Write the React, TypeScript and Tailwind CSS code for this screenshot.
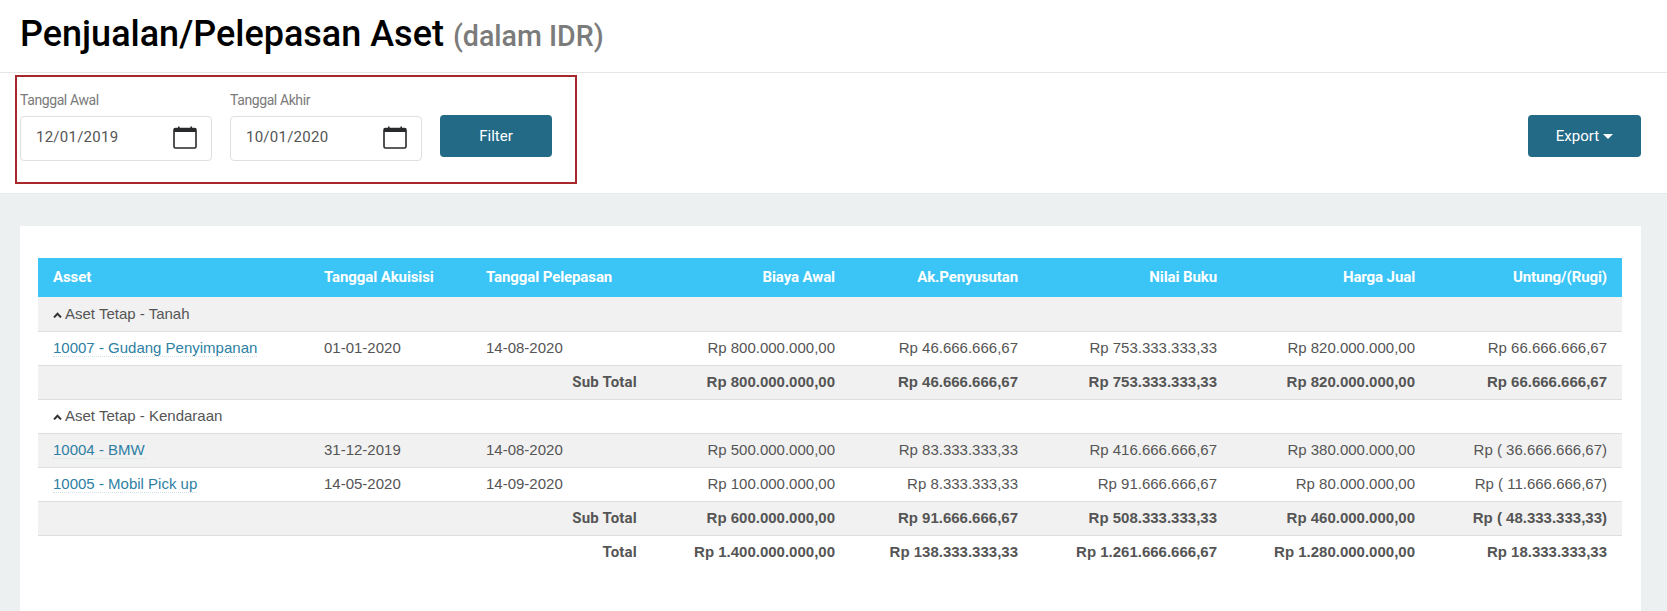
import React from "react";

const font = "font-['Roboto',sans-serif]";

function CalendarIcon() {
  return (
    <svg width="24" height="23" viewBox="0 0 24 23" fill="none" className="shrink-0">
      <rect x="1" y="2.5" width="22" height="19.5" rx="1.5" stroke="#27292b" strokeWidth="1.6" />
      <rect x="1" y="2" width="22" height="4" fill="#27292b" />
      <rect x="5" y="0.5" width="1.6" height="2.5" fill="#27292b" />
      <rect x="17.4" y="0.5" width="1.6" height="2.5" fill="#27292b" />
    </svg>
  );
}

function DateField({ label, value }: { label: string; value: string }) {
  return (
    <div className="w-[192px]">
      <div className="pt-[1px] text-[14px] leading-[20px] text-[#7a7a7a] tracking-[-0.4px]">{label}</div>
      <div className="mt-[6px] h-[45px] flex items-center justify-between pl-[15px] pr-[14px] pb-[2px] border border-[#dfdfdf] rounded-[4px] bg-white">
        <span className="text-[15px] text-[#555] tracking-[0.25px]">{value}</span>
        <CalendarIcon />
      </div>
    </div>
  );
}

function Chevron() {
  return (
    <svg width="9" height="6" viewBox="0 0 9 6" className="inline-block mr-[3px] mb-[-1px]">
      <path d="M1 5.4 L4.5 1.8 L8 5.4" fill="none" stroke="#333" strokeWidth="2" />
    </svg>
  );
}

type Row = { asset: string; a: string; b: string; vals: string[] };

const td = "px-[15px] text-right";

function GroupRow({ name }: { name: string }) {
  return (
    <tr className="h-[34px] border-b border-[#dedede]">
      <td colSpan={8} className="px-[15px] text-[#555]">
        <Chevron />
        {name}
      </td>
    </tr>
  );
}

function DataRow({ row, shaded }: { row: Row; shaded?: boolean }) {
  return (
    <tr className={`h-[34px] border-b border-[#dedede] ${shaded ? "bg-[#f1f1f1]" : ""}`}>
      <td className="px-[15px]">
        <a className="text-[#2e7fa3] border-b border-dotted border-[#d3e0e7]">{row.asset}</a>
      </td>
      <td className="px-[15px]">{row.a}</td>
      <td className="px-[15px]">{row.b}</td>
      {row.vals.map((v, i) => (
        <td key={i} className={td}>
          {v}
        </td>
      ))}
    </tr>
  );
}

function SumRow({ label, vals, shaded }: { label: string; vals: string[]; shaded?: boolean }) {
  return (
    <tr className={`h-[34px] font-bold ${shaded ? "bg-[#f1f1f1] border-b border-[#dedede]" : ""}`}>
      <td colSpan={3} className={`${td} ${font} tracking-[0.2px]`}>
        {label}
      </td>
      {vals.map((v, i) => (
        <td key={i} className={td}>
          {v}
        </td>
      ))}
    </tr>
  );
}

export default function App() {
  return (
    <div className={`${font} relative h-[611px] w-[1667px] overflow-hidden bg-[#ecf0f1]`}>
      <div className="h-[73px] bg-white border-b border-[#e6e6e6] pl-[20px] pt-[10px]">
        <h1 className="text-[36px] leading-[48px] font-medium text-black">
          Penjualan/Pelepasan Aset{" "}
          <span className="text-[28.6px] font-medium text-[#7b7b7b]">(dalam IDR)</span>
        </h1>
      </div>

      <div className="h-[121px] bg-white border-b border-[#e9ecec] flex justify-between pl-[20px] pr-[26px] pt-[16px]">
        <div className="flex gap-[18px]">
          <DateField label="Tanggal Awal" value="12/01/2019" />
          <DateField label="Tanggal Akhir" value="10/01/2020" />
          <button className="mt-[26px] h-[42px] w-[112px] rounded-[4px] bg-[#236a87] text-white text-[15px]">
            Filter
          </button>
        </div>
        <button className="mt-[26px] h-[42px] w-[113px] rounded-[4px] bg-[#236a87] text-white text-[15px] flex items-center justify-center gap-[4px]">
          Export
          <span className="border-x-[5px] border-t-[5px] border-x-transparent border-t-white" />
        </button>
      </div>

      <div className="mx-[20px] mt-[32px] mr-[26px] h-[400px] bg-white pt-[32px] px-[18px] pr-[19px]">
        <table className="w-[1584px] table-fixed border-collapse text-[15px] text-[#555] font-['Liberation_Sans',sans-serif]">
          <colgroup>
            <col className="w-[271px]" />
            <col className="w-[162px]" />
            <col className="w-[181px]" />
            <col className="w-[198px]" />
            <col className="w-[183px]" />
            <col className="w-[199px]" />
            <col className="w-[198px]" />
            <col className="w-[192px]" />
          </colgroup>
          <thead>
            <tr className={`h-[39px] bg-[#3bc5f6] text-white font-bold ${font} tracking-[-0.1px]`}>
              <th className="px-[15px] text-left">Asset</th>
              <th className="px-[15px] text-left">Tanggal Akuisisi</th>
              <th className="px-[15px] text-left">Tanggal Pelepasan</th>
              <th className={td}>Biaya Awal</th>
              <th className={td}>Ak.Penyusutan</th>
              <th className={td}>Nilai Buku</th>
              <th className={td}>Harga Jual</th>
              <th className={td}>Untung/(Rugi)</th>
            </tr>
          </thead>
          <tbody>
            <tr className="h-[34px] bg-[#f1f1f1] border-b border-[#dedede]">
              <td colSpan={8} className="px-[15px] text-[#555]">
                <Chevron />
                Aset Tetap - Tanah
              </td>
            </tr>
            <DataRow
              row={{
                asset: "10007 - Gudang Penyimpanan",
                a: "01-01-2020",
                b: "14-08-2020",
                vals: ["Rp 800.000.000,00", "Rp 46.666.666,67", "Rp 753.333.333,33", "Rp 820.000.000,00", "Rp 66.666.666,67"],
              }}
            />
            <SumRow
              shaded
              label="Sub Total"
              vals={["Rp 800.000.000,00", "Rp 46.666.666,67", "Rp 753.333.333,33", "Rp 820.000.000,00", "Rp 66.666.666,67"]}
            />
            <GroupRow name="Aset Tetap - Kendaraan" />
            <DataRow
              shaded
              row={{
                asset: "10004 - BMW",
                a: "31-12-2019",
                b: "14-08-2020",
                vals: ["Rp 500.000.000,00", "Rp 83.333.333,33", "Rp 416.666.666,67", "Rp 380.000.000,00", "Rp ( 36.666.666,67)"],
              }}
            />
            <DataRow
              row={{
                asset: "10005 - Mobil Pick up",
                a: "14-05-2020",
                b: "14-09-2020",
                vals: ["Rp 100.000.000,00", "Rp 8.333.333,33", "Rp 91.666.666,67", "Rp 80.000.000,00", "Rp ( 11.666.666,67)"],
              }}
            />
            <SumRow
              shaded
              label="Sub Total"
              vals={["Rp 600.000.000,00", "Rp 91.666.666,67", "Rp 508.333.333,33", "Rp 460.000.000,00", "Rp ( 48.333.333,33)"]}
            />
            <SumRow
              label="Total"
              vals={["Rp 1.400.000.000,00", "Rp 138.333.333,33", "Rp 1.261.666.666,67", "Rp 1.280.000.000,00", "Rp 18.333.333,33"]}
            />
          </tbody>
        </table>
      </div>

      {/* annotation box over the filter */}
      <div className="absolute left-[15px] top-[75px] w-[562px] h-[109px] border-2 border-[#a8272b]" />
    </div>
  );
}
